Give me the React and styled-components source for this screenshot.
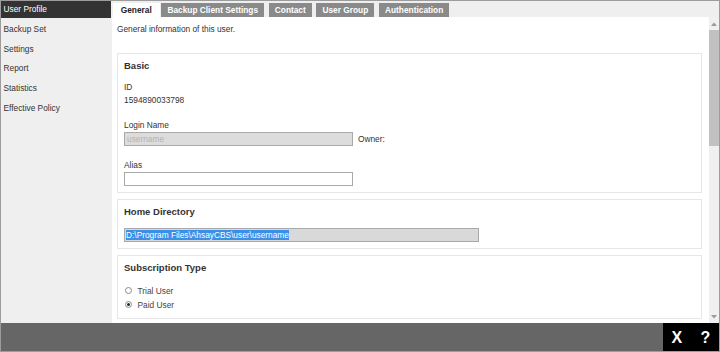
import styled, { createGlobalStyle } from 'styled-components';

const GlobalStyle = createGlobalStyle`
  html, body {
    margin: 0;
    padding: 0;
    background: #fff;
  }
  * {
    box-sizing: border-box;
  }
  body {
    font-family: "Liberation Sans", Arial, sans-serif;
    color: #333;
  }
`;

const Window = styled.div`
  width: 720px;
  height: 352px;
  border: 1px solid #9c9c9c;
  display: flex;
  flex-direction: column;
  overflow: hidden;
`;

const Body = styled.div`
  flex: 1;
  min-height: 0;
  display: flex;
`;

const Sidebar = styled.nav`
  width: 110px;
  background: #efefef;
  display: flex;
  flex-direction: column;
`;

const NavItem = styled.div`
  height: 17.3px;
  line-height: 17.3px;
  margin-bottom: 2.5px;
  padding-left: 2.5px;
  font-size: 8.33px;
  color: ${(p) => (p.$active ? '#fff' : '#333')};
  background: ${(p) => (p.$active ? '#333' : 'transparent')};
`;

const Main = styled.div`
  flex: 1;
  min-width: 0;
  display: flex;
  flex-direction: column;
  background: #efefef;
`;

const TabBar = styled.div`
  height: 16.3px;
  padding-left: 2px;
  display: flex;
  align-items: flex-end;
`;

const Tab = styled.div`
  height: 14.3px;
  line-height: 14.3px;
  padding: 0 ${(p) => (p.$active ? '8px 0 7.7px' : '6px')};
  margin-right: ${(p) => (p.$active ? '1.7px' : '4.7px')};
  font-size: 8.33px;
  font-weight: bold;
  color: ${(p) => (p.$active ? '#222' : '#fff')};
  background: ${(p) => (p.$active ? '#fff' : '#8a8a8a')};
  white-space: nowrap;
`;

const Panel = styled.div`
  flex: 1;
  min-height: 0;
  margin-left: 1px;
  display: flex;
  background: #fff;
`;

const Content = styled.div`
  flex: 1;
  min-width: 0;
  padding: 7px 7px 0 5px;
  overflow: hidden;
`;

const Intro = styled.div`
  font-size: 8.33px;
  line-height: 10.6px;
  margin-bottom: 18px;
`;

const Card = styled.section`
  border: 1px solid #e6e6e6;
  padding: 5px 6px 6px;
  margin-bottom: 6.3px;
`;

const CardTitle = styled.h3`
  margin: 0 0 ${(p) => p.$gap || '9.5px'};
  font-size: 9.5px;
  line-height: 13px;
  font-weight: bold;
  color: #333;
`;

const Field = styled.div`
  & + & {
    margin-top: 12.3px;
  }
`;

const Label = styled.div`
  font-size: 8.33px;
  line-height: 12.7px;
  color: #333;
`;

const Row = styled.div`
  display: flex;
  align-items: center;
  gap: 5px;
`;

const TextInput = styled.input`
  display: block;
  width: ${(p) => p.$width || '229px'};
  height: 14px;
  margin: 0.5px 0 0;
  padding: 0 2px;
  border: 1px solid #a9a9a9;
  border-radius: 0;
  font-family: inherit;
  font-size: 8.33px;
  color: #333;
  background: ${(p) => (p.disabled ? '#dcdcdc' : '#fff')};
  outline: none;

  &::placeholder {
    color: #b3b3b3;
  }
`;

const PathBox = styled.div`
  width: 355px;
  height: 14px;
  padding: 0 1px;
  border: 1px solid #a9a9a9;
  background: #d9d9d9;
  font-size: 8.33px;
  line-height: 12px;
  white-space: nowrap;
  overflow: hidden;
`;

const Selected = styled.span`
  background: #3a8fe8;
  color: #fff;
`;

const RadioRow = styled.label`
  display: flex;
  align-items: center;
  height: 14.4px;
  padding-left: 1px;
  font-size: 8.33px;
  color: #444;
`;

const RadioDot = styled.span`
  width: 7px;
  height: 7px;
  margin-right: 5.5px;
  border: 1px solid #8a8a8a;
  border-radius: 50%;
  background: #fff;
  display: flex;
  align-items: center;
  justify-content: center;

  &::after {
    content: '';
    width: 3px;
    height: 3px;
    border-radius: 50%;
    background: ${(p) => (p.$checked ? '#222' : 'transparent')};
  }
`;

const RadioList = styled.div`
  margin-top: 9px;
`;

const Scrollbar = styled.div`
  width: 10px;
  background: #f0f0f0;
  display: flex;
  flex-direction: column;
  align-items: center;
`;

const Arrow = styled.div`
  height: 12.7px;
  display: flex;
  align-items: center;
  justify-content: center;
`;

const Thumb = styled.div`
  width: 10px;
  height: 115.7px;
  background: #c1c1c1;
`;

const Track = styled.div`
  flex: 1;
`;

const Footer = styled.footer`
  height: 28px;
  background: #666;
  display: flex;
  justify-content: flex-end;
`;

const Actions = styled.div`
  width: 56.5px;
  background: #000;
  display: flex;
  align-items: center;
  padding: 1px 0 0 9px;
  gap: 18.3px;
`;

const ActionButton = styled.span`
  font-size: 16px;
  font-weight: bold;
  color: #fff;
  line-height: 1;
`;

const navItems = ['User Profile', 'Backup Set', 'Settings', 'Report', 'Statistics', 'Effective Policy'];
const tabs = ['General', 'Backup Client Settings', 'Contact', 'User Group', 'Authentication'];

function Triangle({ up }) {
  return (
    <svg width="6" height="4" viewBox="0 0 6 4">
      <path d={up ? 'M0 4 L3 0.5 L6 4 Z' : 'M0 0 L3 3.5 L6 0 Z'} fill="#9a9a9a" />
    </svg>
  );
}

export default function App() {
  return (
    <>
      <GlobalStyle />
      <Window>
        <Body>
          <Sidebar>
            {navItems.map((item, i) => (
              <NavItem key={item} $active={i === 0}>
                {item}
              </NavItem>
            ))}
          </Sidebar>
          <Main>
            <TabBar>
              {tabs.map((tab, i) => (
                <Tab key={tab} $active={i === 0}>
                  {tab}
                </Tab>
              ))}
            </TabBar>
            <Panel>
              <Content>
                <Intro>General information of this user.</Intro>

                <Card>
                  <CardTitle>Basic</CardTitle>
                  <Field>
                    <Label>ID</Label>
                    <Label>1594890033798</Label>
                  </Field>
                  <Field>
                    <Label>Login Name</Label>
                    <Row>
                      <TextInput disabled placeholder="username" />
                      <Label>Owner:</Label>
                    </Row>
                  </Field>
                  <Field>
                    <Label>Alias</Label>
                    <TextInput />
                  </Field>
                </Card>

                <Card>
                  <CardTitle $gap="10px">Home Directory</CardTitle>
                  <PathBox>
                    <Selected>D:\Program Files\AhsayCBS\user\username</Selected>
                  </PathBox>
                </Card>

                <Card>
                  <CardTitle $gap="0">Subscription Type</CardTitle>
                  <RadioList>
                    <RadioRow>
                      <RadioDot />
                      Trial User
                    </RadioRow>
                    <RadioRow>
                      <RadioDot $checked />
                      Paid User
                    </RadioRow>
                  </RadioList>
                </Card>
              </Content>
              <Scrollbar>
                <Arrow>
                  <Triangle up />
                </Arrow>
                <Thumb />
                <Track />
                <Arrow>
                  <Triangle />
                </Arrow>
              </Scrollbar>
            </Panel>
          </Main>
        </Body>
        <Footer>
          <Actions>
            <ActionButton>X</ActionButton>
            <ActionButton>?</ActionButton>
          </Actions>
        </Footer>
      </Window>
    </>
  );
}
